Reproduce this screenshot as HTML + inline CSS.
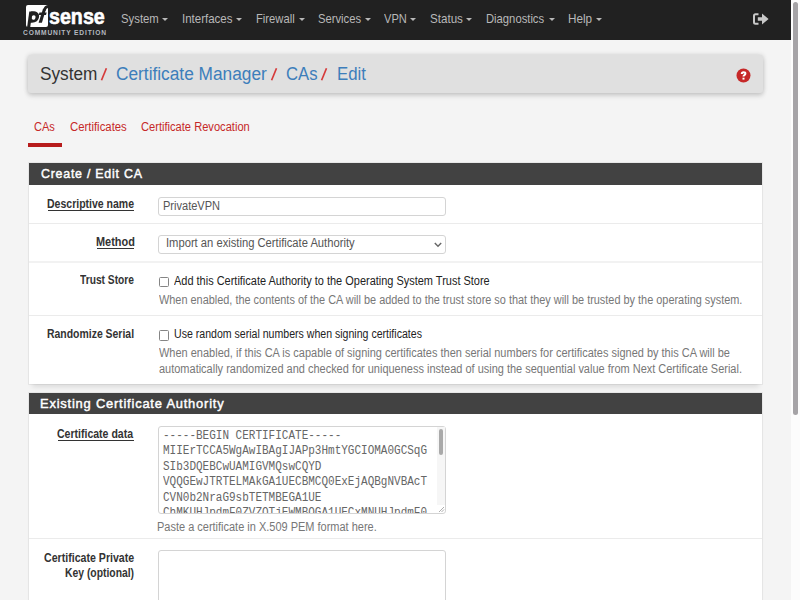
<!DOCTYPE html>
<html><head><meta charset="utf-8">
<style>
*{box-sizing:border-box;margin:0;padding:0}
html,body{width:800px;height:600px;overflow:hidden}
body{font-family:'Liberation Sans',sans-serif;background:#f4f4f4;position:relative}
.a{position:absolute}
.t{position:absolute;white-space:nowrap;transform-origin:0 0;font-family:'Liberation Sans',sans-serif}
.caret{position:absolute;top:18px;width:0;height:0;border-left:3.25px solid transparent;border-right:3.25px solid transparent;border-top:3.5px solid #b8b8b8}
.sep{position:absolute;left:29px;width:733px;height:1px;background:#ebebeb}
.box{position:absolute;background:#fff;border:1px solid #d4d4d4;border-radius:3px}
.cb{position:absolute;width:10.5px;height:10.5px;border:1px solid #858585;border-radius:1.5px;background:#fff}
.ul{position:absolute;height:1px;background:#333}
.mono{position:absolute;font-family:'Liberation Mono',monospace;font-size:12px;line-height:15.5px;color:#666;white-space:pre;transform-origin:0 0;transform:scaleX(0.9167)}
</style></head><body>
<div class="a" style="left:0;top:0;width:791px;height:40px;background:#212121"></div>
<div class="a" style="left:791px;top:0;width:9px;height:600px;background:#fcfcfc"></div>
<div class="a" style="left:793px;top:2px;width:5px;height:413px;background:#a5a3a6;border-radius:2.5px"></div>

<!-- logo -->
<div class="a" style="left:26px;top:5px;width:22px;height:22px;background:#fff;border-radius:2px"></div>
<svg class="a" style="left:0;top:0" width="60" height="30" viewBox="0 0 60 30">
 <g fill="#212121">
  <polygon points="29.3,11.5 32.4,11.5 30.2,27.3 27.1,27.3"/>
  <path fill-rule="evenodd" d="M31.2 11.4 C36.4 11.0 39.6 13 39.1 16.8 C38.6 20.8 35.6 22.9 31.4 22.7 L30.0 22.7 L31.2 11.4 Z M33.8 15.2 C35.1 15.2 35.7 16.1 35.5 17.4 C35.3 18.8 34.5 19.7 33.3 19.7 C32.1 19.7 31.5 18.8 31.7 17.5 C31.9 16.1 32.6 15.2 33.8 15.2 Z"/>
  <polygon points="43.0,8.8 46.1,8.8 41.9,22.7 38.6,22.7"/>
  <path d="M44.3 10.6 C44.9 7.5 46.3 6.4 48.4 6.6" fill="none" stroke="#212121" stroke-width="2.7"/>
  <polygon points="39.4,12.6 46.6,12.6 46.0,15.0 38.8,15.0"/>
 </g>
</svg>
<!-- logout icon -->
<svg class="a" style="left:752.7px;top:12.6px" width="16" height="12" viewBox="0 0 16 12">
 <path d="M5.5 1.2 H2.5 Q1 1.2 1 2.7 V9.3 Q1 10.8 2.5 10.8 H5.5" fill="none" stroke="#c8c8c8" stroke-width="2"/>
 <path d="M4.8 4.3 H9 V0.6 L15.6 6 L9 11.4 V7.7 H4.8 Z" fill="#c8c8c8"/>
</svg>

<!-- breadcrumb -->
<div class="a" style="left:28px;top:55px;width:735px;height:38px;background:#e0e0e0;border-radius:3px;box-shadow:0 0 5px rgba(0,0,0,.16),0 3px 5px rgba(0,0,0,.12)"></div>
<svg class="a" style="left:736px;top:68px" width="15" height="15" viewBox="0 0 15 15">
 <circle cx="7.5" cy="7.5" r="7" fill="#c62828"/>
 <path d="M5.8 5.9 Q5.8 4.2 7.6 4.2 Q9.4 4.2 9.4 5.6 Q9.4 6.6 8.4 7.1 Q7.5 7.6 7.5 8.6" fill="none" stroke="#fff" stroke-width="2"/>
 <rect x="6.5" y="9.7" width="2" height="1.9" fill="#fff"/>
</svg>

<svg class="a" style="left:0;top:60px" width="340" height="26" viewBox="0 60 340 26">
 <g stroke="#d63b3b" stroke-width="1.7" stroke-linecap="butt">
 <line x1="101.5" y1="80.3" x2="106.4" y2="68.3"/>
 <line x1="271.6" y1="80.3" x2="276.5" y2="68.3"/>
 <line x1="321.6" y1="80.3" x2="326.5" y2="68.3"/>
 </g></svg>
<!-- tab underline -->
<div class="a" style="left:28px;top:143px;width:34px;height:4px;background:#b71c1c"></div>

<!-- panel 1 -->
<div class="a" style="left:29px;top:163px;width:733px;height:221px;background:#fff;box-shadow:0 0 0 1px rgba(0,0,0,.05),0 6px 5px -3px rgba(0,0,0,.10)"></div>
<div class="a" style="left:29px;top:163px;width:733px;height:22px;background:#424242"></div>
<div class="sep" style="top:223px"></div>
<div class="sep" style="top:261px;height:2px;background:#f2f2f2"></div>
<div class="sep" style="top:315px"></div>

<div class="box" style="left:158px;top:197px;width:288px;height:19px"></div>
<div class="box" style="left:158px;top:235px;width:288px;height:19px"></div>
<svg class="a" style="left:434px;top:242px" width="8" height="6" viewBox="0 0 8 6"><path d="M0.8 1 L4 4.3 L7.2 1" fill="none" stroke="#666" stroke-width="1.4"/></svg>
<div class="cb" style="left:158.5px;top:276.5px"></div>
<div class="cb" style="left:158.5px;top:330px"></div>
<div class="ul" style="left:48px;top:210px;width:86px"></div>
<div class="ul" style="left:97px;top:248px;width:37px"></div>

<!-- panel 2 -->
<div class="a" style="left:29px;top:393px;width:733px;height:220px;background:#fff;box-shadow:0 0 0 1px rgba(0,0,0,.05),0 6px 5px -3px rgba(0,0,0,.10)"></div>
<div class="a" style="left:29px;top:393px;width:733px;height:21px;background:#424242"></div>
<div class="sep" style="top:538px"></div>
<div class="ul" style="left:58px;top:439.5px;width:76px"></div>
<div class="box" style="left:158px;top:426px;width:288px;height:88px;overflow:hidden"></div>
<div class="a" style="left:159px;top:427px;width:286px;height:86px;overflow:hidden">
 <div class="mono" style="left:4px;top:1.5px">-----BEGIN CERTIFICATE-----<br>MIIErTCCA5WgAwIBAgIJAPp3HmtYGCIOMA0GCSqG<br>SIb3DQEBCwUAMIGVMQswCQYD<br>VQQGEwJTRTELMAkGA1UECBMCQ0ExEjAQBgNVBAcT<br>CVN0b2NraG9sbTETMBEGA1UE<br>ChMKUHJpdmF0ZVZQTjEWMBQGA1UECxMNUHJpdmF0</div>
</div>
<div class="a" style="left:437px;top:427px;width:8px;height:78px;background:#f6f6f6"></div>
<div class="a" style="left:438.5px;top:429px;width:4.5px;height:26px;background:#a9a9a9;border-radius:2px"></div>
<svg class="a" style="left:437px;top:505px" width="8" height="8" viewBox="0 0 8 8"><path d="M7 2 L2 7 M7 4.5 L4.5 7" stroke="#999" stroke-width="0.8"/></svg>
<div class="box" style="left:158px;top:550px;width:288px;height:80px"></div>

<div class="t" style="left:121.28px;top:12.12px;font-size:13px;line-height:13px;font-weight:400;color:#b8b8b8;transform:scaleX(0.8727);">System</div>
<div class="t" style="left:182.25px;top:12.12px;font-size:13px;line-height:13px;font-weight:400;color:#b8b8b8;transform:scaleX(0.8835);">Interfaces</div>
<div class="t" style="left:256.18px;top:12.12px;font-size:13px;line-height:13px;font-weight:400;color:#b8b8b8;transform:scaleX(0.8647);">Firewall</div>
<div class="t" style="left:317.79px;top:12.12px;font-size:13px;line-height:13px;font-weight:400;color:#b8b8b8;transform:scaleX(0.8649);">Services</div>
<div class="t" style="left:384.10px;top:12.12px;font-size:13px;line-height:13px;font-weight:400;color:#b8b8b8;transform:scaleX(0.8541);">VPN</div>
<div class="t" style="left:430.06px;top:12.12px;font-size:13px;line-height:13px;font-weight:400;color:#b8b8b8;transform:scaleX(0.8935);">Status</div>
<div class="t" style="left:485.93px;top:12.12px;font-size:13px;line-height:13px;font-weight:400;color:#b8b8b8;transform:scaleX(0.8649);">Diagnostics</div>
<div class="t" style="left:567.63px;top:12.12px;font-size:13px;line-height:13px;font-weight:400;color:#b8b8b8;transform:scaleX(0.9006);">Help</div>
<div class="t" style="left:49.15px;top:5.80px;font-size:22px;line-height:22px;font-weight:700;color:#ffffff;transform:scaleX(0.8939);-webkit-text-stroke:0.6px #fff;">sense</div>
<div class="t" style="left:23.35px;top:29.25px;font-size:8px;line-height:8px;font-weight:700;color:#b4b9c0;transform:scaleX(0.8321);letter-spacing:1px;">COMMUNITY EDITION</div>
<div class="t" style="left:39.67px;top:65.14px;font-size:18px;line-height:18px;font-weight:400;color:#333333;transform:scaleX(0.9559);">System</div>
<div class="t" style="left:116.23px;top:65.14px;font-size:18px;line-height:18px;font-weight:400;color:#3d7ebb;transform:scaleX(0.9600);">Certificate Manager</div>
<div class="t" style="left:286.27px;top:65.14px;font-size:18px;line-height:18px;font-weight:400;color:#3d7ebb;transform:scaleX(0.9256);">CAs</div>
<div class="t" style="left:336.50px;top:65.14px;font-size:18px;line-height:18px;font-weight:400;color:#3d7ebb;transform:scaleX(0.9327);">Edit</div>
<div class="t" style="left:34.47px;top:120.81px;font-size:12px;line-height:12px;font-weight:400;color:#c62828;transform:scaleX(0.9207);">CAs</div>
<div class="t" style="left:70.19px;top:120.81px;font-size:12px;line-height:12px;font-weight:400;color:#c62828;transform:scaleX(0.9461);">Certificates</div>
<div class="t" style="left:141.21px;top:120.81px;font-size:12px;line-height:12px;font-weight:400;color:#c62828;transform:scaleX(0.9264);">Certificate Revocation</div>
<div class="t" style="left:40.86px;top:167.00px;font-size:13px;line-height:13px;font-weight:400;color:#ffffff;transform:scaleX(0.9526);letter-spacing:0.8px;-webkit-text-stroke:0.45px #fff;">Create / Edit CA</div>
<div class="t" style="left:40.22px;top:397.30px;font-size:13px;line-height:13px;font-weight:400;color:#ffffff;transform:scaleX(0.9924);letter-spacing:0.8px;-webkit-text-stroke:0.45px #fff;">Existing Certificate Authority</div>
<div class="t" style="left:47.08px;top:197.85px;font-size:12px;line-height:12px;font-weight:700;color:#333333;transform:scaleX(0.8759);">Descriptive name</div>
<div class="t" style="left:95.65px;top:236.05px;font-size:12px;line-height:12px;font-weight:700;color:#333333;transform:scaleX(0.9104);">Method</div>
<div class="t" style="left:79.91px;top:274.05px;font-size:12px;line-height:12px;font-weight:700;color:#333333;transform:scaleX(0.8513);">Trust Store</div>
<div class="t" style="left:47.19px;top:327.80px;font-size:12px;line-height:12px;font-weight:700;color:#333333;transform:scaleX(0.8700);">Randomize Serial</div>
<div class="t" style="left:57.43px;top:427.85px;font-size:12px;line-height:12px;font-weight:700;color:#333333;transform:scaleX(0.8768);">Certificate data</div>
<div class="t" style="left:44.13px;top:551.95px;font-size:12px;line-height:12px;font-weight:700;color:#333333;transform:scaleX(0.8837);">Certificate Private</div>
<div class="t" style="left:64.70px;top:567.35px;font-size:12px;line-height:12px;font-weight:700;color:#333333;transform:scaleX(0.8634);">Key (optional)</div>
<div class="t" style="left:162.52px;top:199.51px;font-size:12px;line-height:12px;font-weight:400;color:#555555;transform:scaleX(0.9202);">PrivateVPN</div>
<div class="t" style="left:165.63px;top:237.11px;font-size:12px;line-height:12px;font-weight:400;color:#555555;transform:scaleX(0.9332);">Import an existing Certificate Authority</div>
<div class="t" style="left:174.01px;top:274.71px;font-size:12px;line-height:12px;font-weight:400;color:#222222;transform:scaleX(0.9137);">Add this Certificate Authority to the Operating System Trust Store</div>
<div class="t" style="left:173.65px;top:327.96px;font-size:12px;line-height:12px;font-weight:400;color:#222222;transform:scaleX(0.8808);">Use random serial numbers when signing certificates</div>
<div class="t" style="left:158.79px;top:293.61px;font-size:12px;line-height:12px;font-weight:400;color:#777777;transform:scaleX(0.9091);">When enabled, the contents of the CA will be added to the trust store so that they will be trusted by the operating system.</div>
<div class="t" style="left:158.79px;top:347.11px;font-size:12px;line-height:12px;font-weight:400;color:#777777;transform:scaleX(0.9155);">When enabled, if this CA is capable of signing certificates then serial numbers for certificates signed by this CA will be</div>
<div class="t" style="left:158.50px;top:362.96px;font-size:12px;line-height:12px;font-weight:400;color:#777777;transform:scaleX(0.9151);">automatically randomized and checked for uniqueness instead of using the sequential value from Next Certificate Serial.</div>
<div class="t" style="left:156.78px;top:521.11px;font-size:12px;line-height:12px;font-weight:400;color:#777777;transform:scaleX(0.9151);">Paste a certificate in X.509 PEM format here.</div>
<div class="caret" style="left:162.25px"></div>
<div class="caret" style="left:236.00px"></div>
<div class="caret" style="left:298.50px"></div>
<div class="caret" style="left:364.60px"></div>
<div class="caret" style="left:410.40px"></div>
<div class="caret" style="left:466.20px"></div>
<div class="caret" style="left:548.60px"></div>
<div class="caret" style="left:595.50px"></div>
</body></html>
